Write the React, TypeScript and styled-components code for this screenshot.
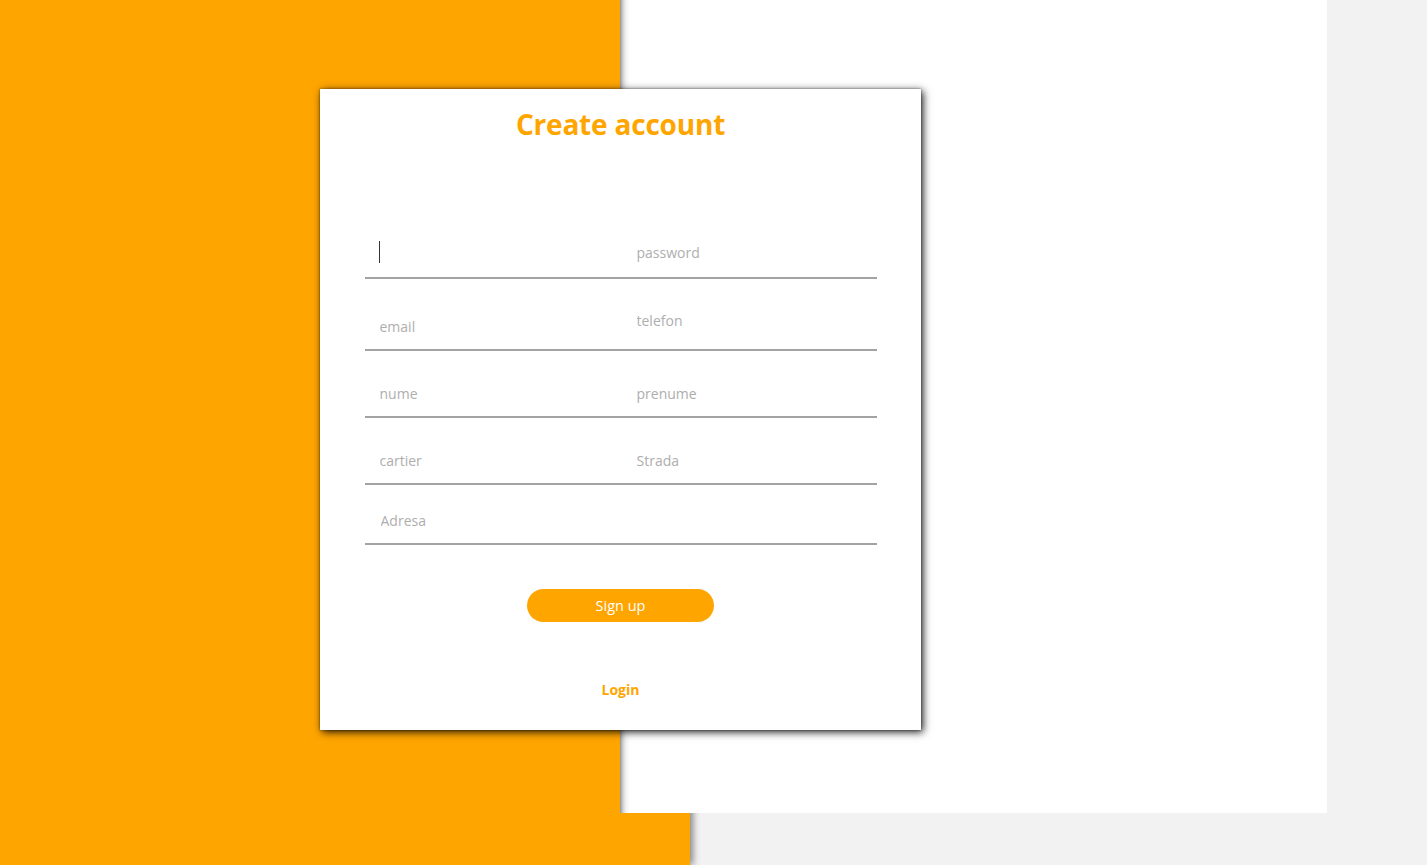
import React from "react";
import styled, { createGlobalStyle } from "styled-components";

const GlobalStyle = createGlobalStyle`
  html, body {
    margin: 0;
    padding: 0;
    background: #f2f2f2;
    font-family: "Open Sans", "Noto Sans", Arial, sans-serif;
  }
  * { box-sizing: border-box; }
`;

const ORANGE = "#ffa500";

const Page = styled.div`
  position: relative;
  width: 100%;
  height: 100vh;
  min-height: 865px;
  display: grid;
  grid-template-columns: 620px 70px 637px 1fr;
  grid-template-rows: 813px 1fr;
  overflow: hidden;
`;

const OrangePanel = styled.div`
  grid-column: 1 / 3;
  grid-row: 1 / 3;
  background: ${ORANGE};
  box-shadow: 3px 0 7px rgba(0, 0, 0, 0.45);
`;

const WhitePanel = styled.div`
  grid-column: 2 / 4;
  grid-row: 1 / 2;
  background:
    linear-gradient(
      to right,
      rgba(0, 0, 0, 0.42) 0px,
      rgba(0, 0, 0, 0.18) 3px,
      rgba(0, 0, 0, 0.05) 6px,
      rgba(0, 0, 0, 0) 10px
    ),
    #ffffff;
`;

const Card = styled.form`
  position: absolute;
  left: 320px;
  top: 89px;
  width: 601px;
  height: 641px;
  background: #ffffff;
  box-shadow: 0 0 2px rgba(0, 0, 0, 0.45), 2px 2px 8px rgba(0, 0, 0, 0.9);
  display: flex;
  flex-direction: column;
  align-items: center;
  padding-top: 16px;
`;

const Title = styled.h1`
  margin: 0;
  font-size: 28px;
  line-height: 38px;
  font-weight: 700;
  color: ${ORANGE};
  letter-spacing: -0.2px;
`;

const Fields = styled.div`
  width: 512px;
  margin-top: 86px;
  display: flex;
  flex-direction: column;
`;

const Row = styled.div<{ $gap: number }>`
  position: relative;
  display: flex;
  margin-top: ${(p) => p.$gap}px;
  border-bottom: 2px solid #a3a3a3;
`;

const Input = styled.input<{ $h?: number; $lift?: number; $full?: boolean; $pad?: number }>`
  flex: ${(p) => (p.$full ? "1 1 auto" : "0 0 256px")};
  width: ${(p) => (p.$full ? "100%" : "256px")};
  height: ${(p) => p.$h ?? 44}px;
  border: none;
  outline: none;
  background: transparent;
  padding: 0 0 ${(p) => 2 + (p.$lift ?? 0) * 2}px ${(p) => p.$pad ?? 15}px;
  font-family: "Open Sans", "Noto Sans", Arial, sans-serif;
  font-size: 14px;
  color: #333;
  &::placeholder {
    color: #aeaeae;
    opacity: 1;
  }
`;

const Caret = styled.span`
  position: absolute;
  left: 14px;
  top: 12px;
  width: 1px;
  height: 22px;
  background: #333;
`;

const SignUp = styled.button`
  margin-top: 44px;
  width: 187px;
  height: 33px;
  border: none;
  border-radius: 17px;
  background: ${ORANGE};
  color: #ffffff;
  font-family: "Open Sans", "Noto Sans", Arial, sans-serif;
  font-size: 14.5px;
  line-height: 33px;
  padding: 0;
  cursor: pointer;
`;

const LoginLink = styled.a`
  margin-top: 58px;
  font-size: 14px;
  line-height: 20px;
  font-weight: 700;
  color: ${ORANGE};
  text-decoration: none;
  cursor: pointer;
`;

export default function App() {
  return (
    <>
      <GlobalStyle />
      <Page>
        <OrangePanel />
        <WhitePanel />
        <Card onSubmit={(e) => e.preventDefault()}>
          <Title>Create account</Title>
          <Fields>
            <Row $gap={0}>
              <Input $h={48} type="text" aria-label="username" />
              <Caret />
              <Input $h={48} $pad={16} type="password" placeholder="password" />
            </Row>
            <Row $gap={26}>
              <Input type="email" placeholder="email" />
              <Input $lift={6} $pad={16} type="tel" placeholder="telefon" />
            </Row>
            <Row $gap={21}>
              <Input type="text" placeholder="nume" />
              <Input $pad={16} type="text" placeholder="prenume" />
            </Row>
            <Row $gap={21}>
              <Input type="text" placeholder="cartier" />
              <Input $pad={16} type="text" placeholder="Strada" />
            </Row>
            <Row $gap={14}>
              <Input $full $pad={16} type="text" placeholder="Adresa" />
            </Row>
          </Fields>
          <SignUp type="submit">Sign up</SignUp>
          <LoginLink>Login</LoginLink>
        </Card>
      </Page>
    </>
  );
}
